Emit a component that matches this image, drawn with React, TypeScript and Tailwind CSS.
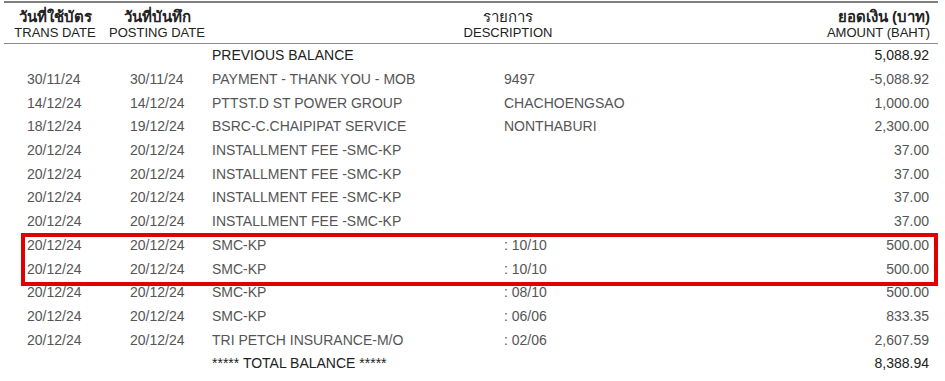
import React from "react";

type Row = { t?: string; p?: string; d: string; d2?: string; a: string; dark?: boolean };

const rows: Row[] = [
  { d: "PREVIOUS BALANCE", a: "5,088.92", dark: true },
  { t: "30/11/24", p: "30/11/24", d: "PAYMENT - THANK YOU - MOB", d2: "9497", a: "-5,088.92" },
  { t: "14/12/24", p: "14/12/24", d: "PTTST.D ST POWER GROUP", d2: "CHACHOENGSAO", a: "1,000.00" },
  { t: "18/12/24", p: "19/12/24", d: "BSRC-C.CHAIPIPAT SERVICE", d2: "NONTHABURI", a: "2,300.00" },
  { t: "20/12/24", p: "20/12/24", d: "INSTALLMENT FEE -SMC-KP", a: "37.00" },
  { t: "20/12/24", p: "20/12/24", d: "INSTALLMENT FEE -SMC-KP", a: "37.00" },
  { t: "20/12/24", p: "20/12/24", d: "INSTALLMENT FEE -SMC-KP", a: "37.00" },
  { t: "20/12/24", p: "20/12/24", d: "INSTALLMENT FEE -SMC-KP", a: "37.00" },
  { t: "20/12/24", p: "20/12/24", d: "SMC-KP", d2: ": 10/10", a: "500.00" },
  { t: "20/12/24", p: "20/12/24", d: "SMC-KP", d2: ": 10/10", a: "500.00" },
  { t: "20/12/24", p: "20/12/24", d: "SMC-KP", d2: ": 08/10", a: "500.00" },
  { t: "20/12/24", p: "20/12/24", d: "SMC-KP", d2: ": 06/06", a: "833.35" },
  { t: "20/12/24", p: "20/12/24", d: "TRI PETCH INSURANCE-M/O", d2: ": 02/06", a: "2,607.59" },
  { d: "***** TOTAL BALANCE *****", a: "8,388.94", dark: true },
];

export default function App() {
  return (
    <div
      className="w-[945px] h-[381px] bg-white overflow-hidden"
      style={{ fontFamily: '"Liberation Sans", Arial, sans-serif' }}
    >
      <div className="ml-[4px] w-[934px]">
        <div className="mt-[1px] border-t-[2px] border-[#808080]" />
        <div className="flex h-[41px] border-b border-[#8c8c8c] text-[#222] pt-[5px]">
          <div className="w-[102px] flex flex-col items-center">
            <div className="text-[15px] font-bold leading-[18px]">วันที่ใช้บัตร</div>
            <div className="text-[13px] leading-[14px]">TRANS DATE</div>
          </div>
          <div className="w-[102px] flex flex-col items-center">
            <div className="text-[15px] font-bold leading-[18px]">วันที่บันทึก</div>
            <div className="text-[13px] leading-[14px]">POSTING DATE</div>
          </div>
          <div className="flex-1 flex flex-col items-center">
            <div className="text-[15px] leading-[18px]">รายการ</div>
            <div className="text-[13px] leading-[14px]">DESCRIPTION</div>
          </div>
          <div className="w-[130px] flex flex-col items-end pr-[8px]">
            <div className="text-[15px] font-bold leading-[18px]">ยอดเงิน (บาท)</div>
            <div className="text-[13px] leading-[14px]">AMOUNT (BAHT)</div>
          </div>
        </div>
        <div className="relative text-[14px]">
          {rows.map((r, i) => (
            <div
              key={i}
              className={`flex items-center h-[23.7px] ${r.dark ? "text-[#222]" : "text-[#555]"}`}
            >
              <div className="w-[102px] pl-[23px]">{r.t}</div>
              <div className="w-[102px] pl-[24px]">{r.p}</div>
              <div className="w-[292px] pl-[4px] whitespace-nowrap">{r.d}</div>
              <div className="flex-1 pl-[4px]">{r.d2}</div>
              <div className="w-[130px] text-right pr-[9px]">{r.a}</div>
            </div>
          ))}
          <div className="absolute left-[17px] top-[189px] w-[917px] h-[53px] border-[4px] border-[#e00000]" />
        </div>
      </div>
    </div>
  );
}
